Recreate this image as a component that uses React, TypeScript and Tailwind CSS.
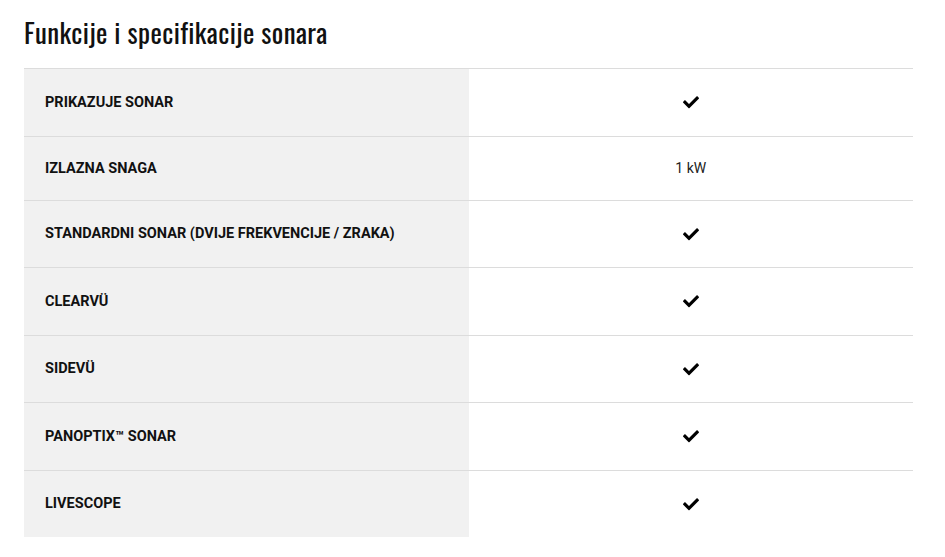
import { FaCheck } from "react-icons/fa";

type Spec = {
  label: string;
  value: string | true;
};

const specs: Spec[] = [
  { label: "Prikazuje sonar", value: true },
  { label: "Izlazna snaga", value: "1 kW" },
  { label: "Standardni sonar (dvije frekvencije / zraka)", value: true },
  { label: "ClearVü", value: true },
  { label: "SideVü", value: true },
  { label: "Panoptix™ sonar", value: true },
  { label: "LiveScope", value: true },
];

export default function App() {
  return (
    <div className="min-h-screen bg-white px-6 pt-[16px] font-['Roboto',sans-serif] text-black">
      <h2 className="mb-[20px] font-['Oswald','Liberation_Sans_Narrow','DejaVu_Sans_Condensed',sans-serif] text-[27px] leading-[32px] tracking-[0.4px] text-[#111]">
        Funkcije i specifikacije sonara
      </h2>

      <div className="w-[889px]">
        {specs.map((spec) => (
          <div
            key={spec.label}
            className="grid grid-cols-2 border-t border-[#dcdcdc]"
          >
            <div className="flex items-center bg-[#f1f1f1] px-[21px] py-[23px] text-[14.5px] font-bold uppercase leading-[17px] text-[#111]">
              {spec.label}
            </div>
            <div className="flex items-center justify-center py-[23px] text-[14px] leading-[17px] text-[#222]">
              {spec.value === true ? (
                <FaCheck className="h-[20.5px] w-[16px] text-black" />
              ) : (
                spec.value
              )}
            </div>
          </div>
        ))}
      </div>
    </div>
  );
}
